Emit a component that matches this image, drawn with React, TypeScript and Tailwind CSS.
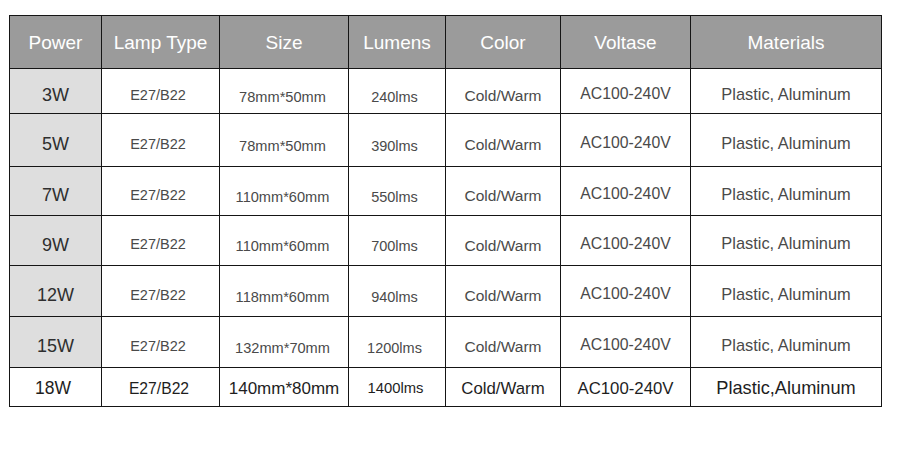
import React from 'react';

interface Row {
  power: string;
  lamp: string;
  size: string;
  lumens: string;
  color: string;
  voltage: string;
  materials: string;
}

const rows: Row[] = [
  { power: '3W', lamp: 'E27/B22', size: '78mm*50mm', lumens: '240lms', color: 'Cold/Warm', voltage: 'AC100-240V', materials: 'Plastic, Aluminum' },
  { power: '5W', lamp: 'E27/B22', size: '78mm*50mm', lumens: '390lms', color: 'Cold/Warm', voltage: 'AC100-240V', materials: 'Plastic, Aluminum' },
  { power: '7W', lamp: 'E27/B22', size: '110mm*60mm', lumens: '550lms', color: 'Cold/Warm', voltage: 'AC100-240V', materials: 'Plastic, Aluminum' },
  { power: '9W', lamp: 'E27/B22', size: '110mm*60mm', lumens: '700lms', color: 'Cold/Warm', voltage: 'AC100-240V', materials: 'Plastic, Aluminum' },
  { power: '12W', lamp: 'E27/B22', size: '118mm*60mm', lumens: '940lms', color: 'Cold/Warm', voltage: 'AC100-240V', materials: 'Plastic, Aluminum' },
  { power: '15W', lamp: 'E27/B22', size: '132mm*70mm', lumens: '1200lms', color: 'Cold/Warm', voltage: 'AC100-240V', materials: 'Plastic, Aluminum' },
];

const headers = ['Power', 'Lamp Type', 'Size', 'Lumens', 'Color', 'Voltase', 'Materials'];

const cell = 'flex items-center justify-center leading-none bg-white';

export default function App() {
  return (
    <div
      className="w-[900px] h-[450px] bg-white pt-[15px] pl-[9px]"
      style={{ fontFamily: '"Liberation Sans", Arial, sans-serif' }}
    >
      <div className="grid w-fit grid-cols-[91px_117px_128px_96px_114px_129px_190px] grid-rows-[52px_44px_52px_48px_49px_50px_50px_38px] gap-px bg-[#151515] border border-[#151515]">
        {/* Header */}
        {headers.map((h) => (
          <div key={h} className="flex items-center justify-center bg-[#9b9b9b] text-white text-[19px] leading-none">
            {h}
          </div>
        ))}

        {/* Body rows */}
        {rows.map((r) => (
          <React.Fragment key={r.power}>
            <div className={`${cell} !bg-[#dedede] pt-2 text-[18px] text-[#2e2e2e]`}>{r.power}</div>
            <div className={`${cell} pt-2 pr-[5px] text-[14.5px] text-[#4a4a4a]`}>{r.lamp}</div>
            <div className={`${cell} pt-3 pr-[3px] text-[14.6px] text-[#4a4a4a]`}>{r.size}</div>
            <div className={`${cell} pt-3 pr-[5px] text-[14.5px] text-[#4a4a4a]`}>{r.lumens}</div>
            <div className={`${cell} pt-[10px] text-[15.5px] text-[#4a4a4a]`}>{r.color}</div>
            <div className={`${cell} pt-[6px] text-[15.8px] text-[#4a4a4a]`}>{r.voltage}</div>
            <div className={`${cell} pt-[6px] text-[16.4px] text-[#4a4a4a]`}>{r.materials}</div>
          </React.Fragment>
        ))}

        {/* Last row */}
        <div className={`${cell} pt-[3px] pr-[5px] text-[17.5px] text-[#1e1e1e]`}>18W</div>
        <div className={`${cell} pt-[3px] pr-[3px] text-[15.7px] text-[#1e1e1e]`}>E27/B22</div>
        <div className={`${cell} pt-[3px] text-[17px] text-[#1e1e1e]`}>140mm*80mm</div>
        <div className={`${cell} pt-[3px] pr-[3px] text-[14.8px] text-[#1e1e1e]`}>1400lms</div>
        <div className={`${cell} pt-[5px] text-[16.8px] text-[#1e1e1e]`}>Cold/Warm</div>
        <div className={`${cell} pt-[5px] text-[16.8px] text-[#1e1e1e]`}>AC100-240V</div>
        <div className={`${cell} pt-[2px] text-[18.2px] text-[#1e1e1e]`}>Plastic,Aluminum</div>
      </div>
    </div>
  );
}
